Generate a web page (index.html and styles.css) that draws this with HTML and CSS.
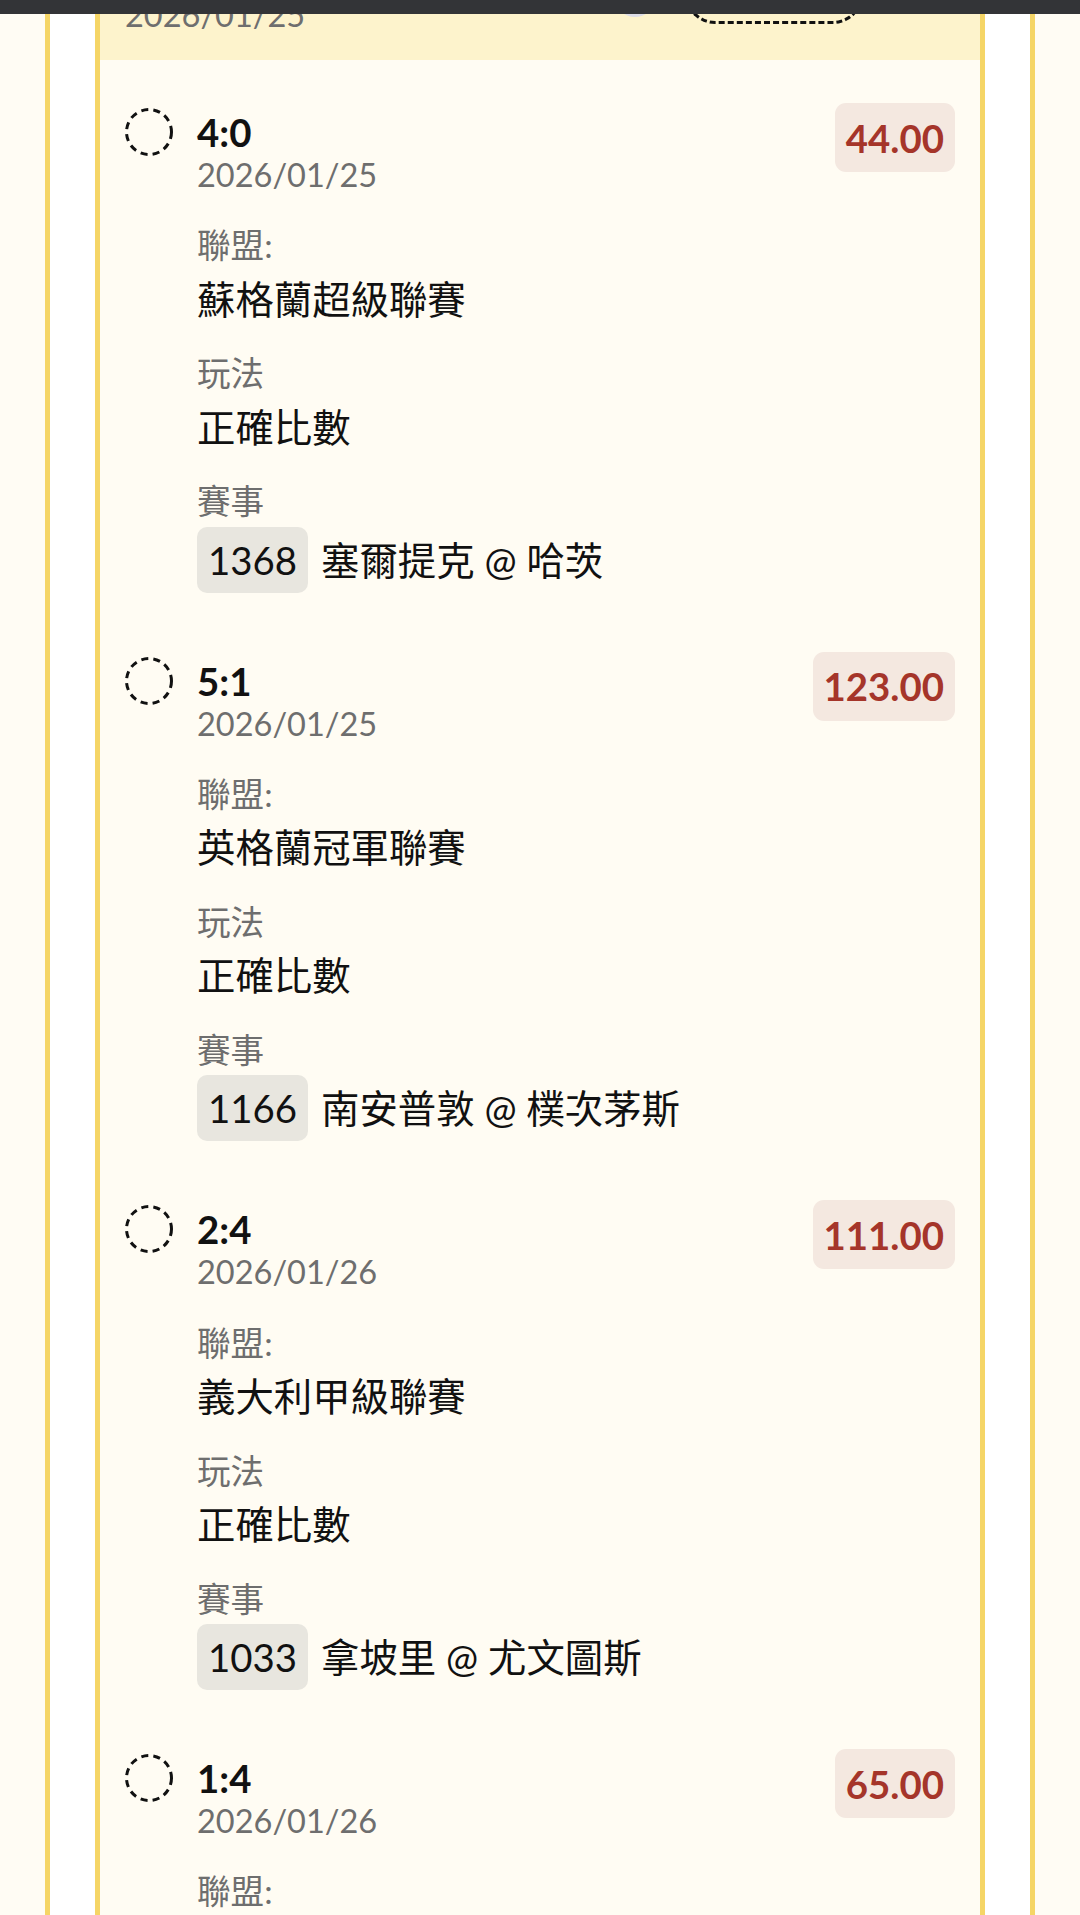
FILE: index.html
```html
<!DOCTYPE html>
<html lang="zh-Hant">
<head>
<meta charset="utf-8">
<title>注單</title>
<link rel="stylesheet" href="styles.css">
</head>
<body>
<div class="topbar"></div>
<div class="frame">
  <div class="card">
    <div class="header">
      <div class="header-date">2026/01/25</div>
      <div class="header-right">
        <span class="header-dot"></span>
        <span class="header-pill"></span>
      </div>
    </div>

    <div class="entry">
      <svg class="check" viewBox="0 0 48 48" width="48" height="48"><circle cx="24" cy="24" r="22.5" fill="none" stroke="#111" stroke-width="3" stroke-dasharray="7 5.2"/></svg>
      <div class="main">
        <div class="score">4:0</div>
        <div class="date">2026/01/25</div>
        <div class="section">
          <div class="label">聯盟:</div>
          <div class="value">蘇格蘭超級聯賽</div>
        </div>
        <div class="section">
          <div class="label">玩法</div>
          <div class="value">正確比數</div>
        </div>
        <div class="section">
          <div class="label">賽事</div>
          <div class="match"><span class="match-no">1368</span><span class="match-name">塞爾提克 @ 哈茨</span></div>
        </div>
      </div>
      <div class="odds">44.00</div>
    </div>

    <div class="entry">
      <svg class="check" viewBox="0 0 48 48" width="48" height="48"><circle cx="24" cy="24" r="22.5" fill="none" stroke="#111" stroke-width="3" stroke-dasharray="7 5.2"/></svg>
      <div class="main">
        <div class="score">5:1</div>
        <div class="date">2026/01/25</div>
        <div class="section">
          <div class="label">聯盟:</div>
          <div class="value">英格蘭冠軍聯賽</div>
        </div>
        <div class="section">
          <div class="label">玩法</div>
          <div class="value">正確比數</div>
        </div>
        <div class="section">
          <div class="label">賽事</div>
          <div class="match"><span class="match-no">1166</span><span class="match-name">南安普敦 @ 樸次茅斯</span></div>
        </div>
      </div>
      <div class="odds">123.00</div>
    </div>

    <div class="entry">
      <svg class="check" viewBox="0 0 48 48" width="48" height="48"><circle cx="24" cy="24" r="22.5" fill="none" stroke="#111" stroke-width="3" stroke-dasharray="7 5.2"/></svg>
      <div class="main">
        <div class="score">2:4</div>
        <div class="date">2026/01/26</div>
        <div class="section">
          <div class="label">聯盟:</div>
          <div class="value">義大利甲級聯賽</div>
        </div>
        <div class="section">
          <div class="label">玩法</div>
          <div class="value">正確比數</div>
        </div>
        <div class="section">
          <div class="label">賽事</div>
          <div class="match"><span class="match-no">1033</span><span class="match-name">拿坡里 @ 尤文圖斯</span></div>
        </div>
      </div>
      <div class="odds">111.00</div>
    </div>

    <div class="entry">
      <svg class="check" viewBox="0 0 48 48" width="48" height="48"><circle cx="24" cy="24" r="22.5" fill="none" stroke="#111" stroke-width="3" stroke-dasharray="7 5.2"/></svg>
      <div class="main">
        <div class="score">1:4</div>
        <div class="date">2026/01/26</div>
        <div class="section">
          <div class="label">聯盟:</div>
        </div>
      </div>
      <div class="odds">65.00</div>
    </div>
  </div>
</div>
</body>
</html>
```

FILE: styles.css
```css
html, body {
  margin: 0;
  padding: 0;
}
body {
  background: #fffcf4;
  font-family: Lato, "Noto Sans CJK TC", sans-serif;
  color: #111;
  height: 1915px;
  overflow: hidden;
}
.topbar {
  position: fixed;
  top: 0;
  left: 0;
  right: 0;
  height: 14px;
  background: #333437;
  z-index: 10;
}
.frame {
  margin-left: 45px;
  width: 990px;
  box-sizing: border-box;
  border-left: 5px solid #f5d566;
  border-right: 5px solid #f5d566;
  background: #ffffff;
  padding: 0 45px;
  min-height: 1915px;
}
.card {
  border-left: 5px solid #f5d566;
  border-right: 5px solid #f5d566;
  background: #fffcf3;
  min-height: 1915px;
}
.header {
  background: #fdf3cc;
  height: 60px;
  padding: 0 25px;
  display: flex;
  align-items: flex-start;
  overflow: hidden;
}
.header-date {
  font-size: 32.5px;
  line-height: 1.2;
  color: #6e6e6e;
  margin-top: -5px;
}
.header-right {
  margin-left: auto;
  margin-right: 92px;
  display: flex;
  align-items: flex-start;
  gap: 30px;
}
.header-dot {
  display: block;
  width: 40px;
  height: 40px;
  border-radius: 50%;
  background: #dcdce6;
  margin-top: -23px;
}
.header-pill {
  display: block;
  width: 178px;
  height: 60px;
  box-sizing: border-box;
  border: 3px dashed #111;
  border-radius: 30px;
  margin-top: -36px;
}
.entry {
  display: flex;
  align-items: flex-start;
  padding: 43px 25px 16px;
}
.check {
  flex: none;
  margin-top: 5px;
  margin-right: 24px;
}
.main {
  flex: 1;
  margin-top: 6px;
}
.score {
  font-size: 38.4px;
  font-weight: 700;
  line-height: 46px;
}
.date {
  font-size: 32.5px;
  line-height: 40.3px;
  color: #6e6e6e;
}
.section {
  margin-top: 20px;
}
.date + .section {
  margin-top: 25px;
}
.label {
  font-size: 33.6px;
  line-height: 50.4px;
  color: #6e6e6e;
}
.value {
  font-size: 38.4px;
  line-height: 57.6px;
}
.match {
  display: flex;
  align-items: center;
  gap: 13px;
  font-size: 38.4px;
}
.match-no {
  background: #e8e6df;
  border-radius: 10px;
  padding: 10px 11px;
  line-height: 46px;
}
.match-name {
  line-height: 46px;
}
.odds {
  flex: none;
  background: #f4e8e0;
  color: #a5352a;
  font-size: 38.4px;
  font-weight: 700;
  line-height: 46px;
  padding: 11.5px 11px;
  border-radius: 11px;
}
```
